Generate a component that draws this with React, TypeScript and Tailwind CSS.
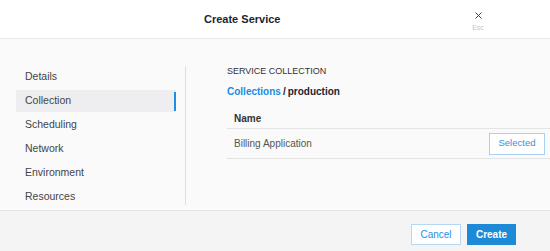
import React from "react";

const items = ["Details", "Collection", "Scheduling", "Network", "Environment", "Resources"];

export default function App() {
  return (
    <div
      className="w-[550px] h-[251px] overflow-hidden bg-white text-[#333]"
      style={{ fontFamily: '"Liberation Sans", Arial, sans-serif' }}
    >
      {/* Header */}
      <div className="h-[39px] flex items-center border-b border-[#e8e8e8] bg-white">
        <div className="pl-[204px] text-[11px] font-bold text-[#1d2430] leading-none">Create Service</div>
        <div className="ml-auto mr-[64px] w-[16px] flex flex-col items-center pt-[4px]">
          <svg width="7" height="7" viewBox="0 0 7 7" className="block">
            <path d="M0.5 0.5 L6.5 6.5 M6.5 0.5 L0.5 6.5" stroke="#444" strokeWidth="1" />
          </svg>
          <div className="text-[7px] leading-none text-[#c4c4c4] mt-[5px]">Esc</div>
        </div>
      </div>

      {/* Body */}
      <div className="h-[172px] flex bg-[#fafafa] border-b border-[#e6e6e6] pt-[26px]">
        <div className="ml-[16px] mt-[1px] w-[170px] h-[139px] border-r border-[#dedede] flex flex-col gap-[2px]">
          {items.map((it) => {
            const active = it === "Collection";
            return (
              <div
                key={it}
                className={
                  "w-[160px] h-[22px] shrink-0 flex items-center pl-[9px] text-[10.5px] text-[#444] " +
                  (active ? "bg-[#eeeef0]" : "")
                }
              >
                <span className="flex-1">{it}</span>
                {active && <div className="w-[2px] h-[19px] bg-[#1a8fe3]" />}
              </div>
            );
          })}
        </div>

        <div className="flex-1 ml-[41px] flex flex-col">
          <div className="text-[9px] leading-[12px] text-[#333] uppercase">Service Collection</div>
          <div className="mt-[8px] text-[10px] leading-[14px] font-bold flex">
            <span className="text-[#1a8be0]">Collections</span>
            <span className="text-[#1d2430] ml-[2px]">/</span>
            <span className="text-[#1d2430] ml-[2px]">production</span>
          </div>
          <div className="mt-[10px] h-[20px] flex items-center pl-[7px] border-b border-[#e4e4e4] text-[10px] font-bold text-[#333]">
            Name
          </div>
          <div className="h-[30px] flex items-center pl-[7px] pr-[5px] border-b border-[#e4e4e4]">
            <span className="text-[10px] text-[#555]">Billing Application</span>
            <div className="ml-auto w-[56px] h-[22px] flex items-center justify-center border border-[#a9cff1] bg-white text-[9.5px] text-[#3a8fdc]">
              Selected
            </div>
          </div>
        </div>
      </div>

      {/* Footer */}
      <div className="h-[40px] bg-[#f4f4f4] flex justify-end items-start pt-[13px] pr-[34px] gap-[6px]">
        <div className="w-[50px] h-[21px] flex items-center justify-center border border-[#b7d8f3] bg-white text-[10px] text-[#2a8de0]">
          Cancel
        </div>
        <div className="w-[49px] h-[21px] flex items-center justify-center bg-[#1d8ad8] text-[10px] font-bold text-white">
          Create
        </div>
      </div>
    </div>
  );
}
